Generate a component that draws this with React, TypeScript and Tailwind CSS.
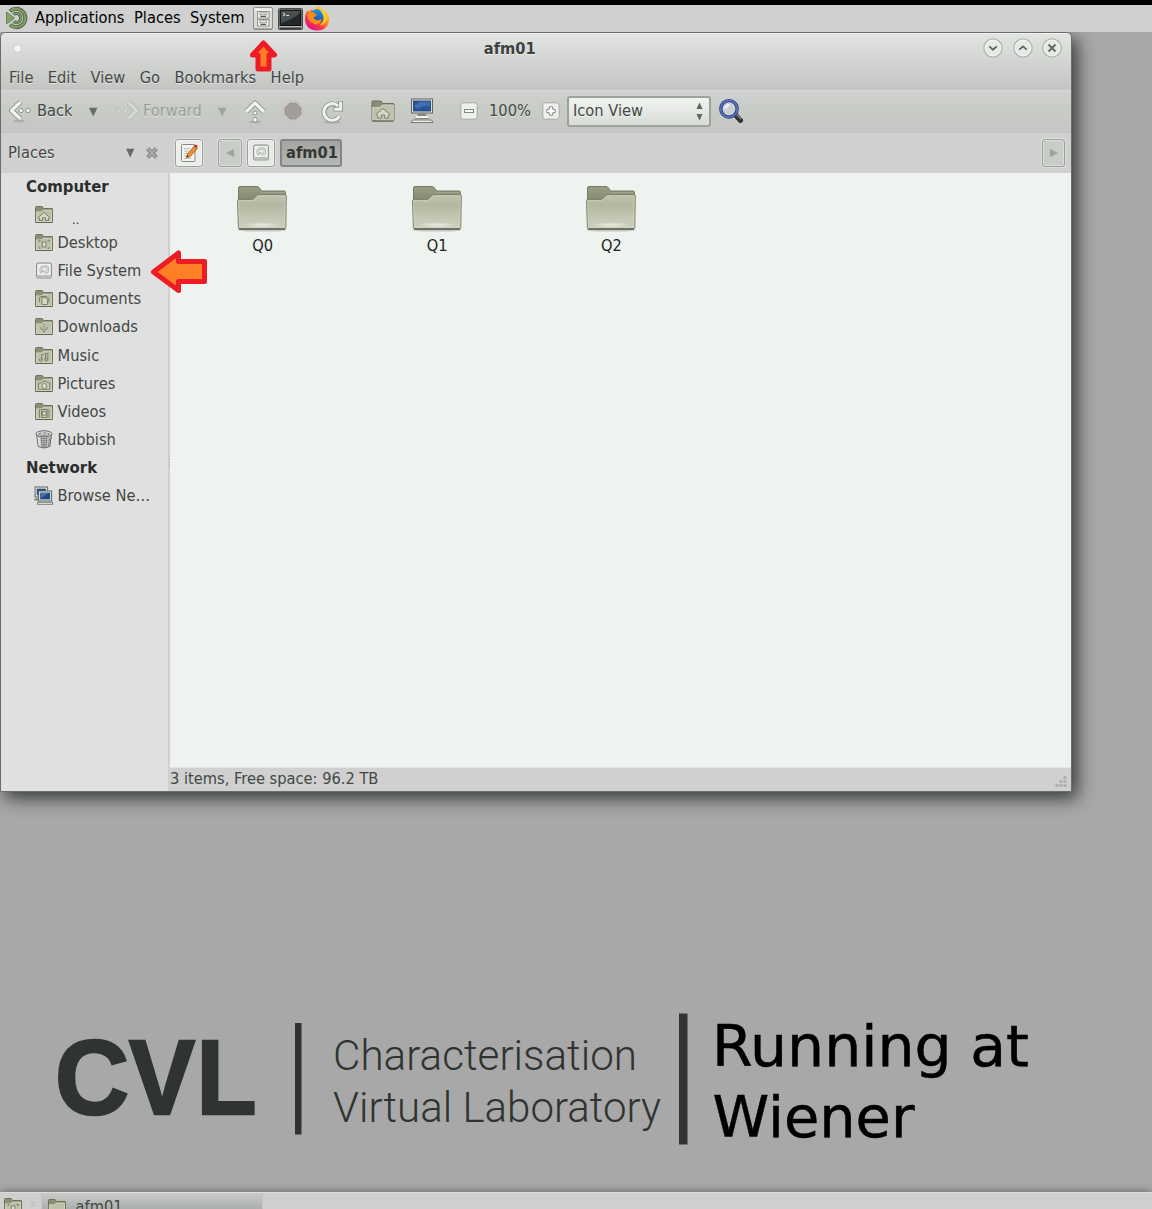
import React, { useId } from "react";

const CARVE = "[text-shadow:0_1px_0_rgba(255,255,255,0.55)]";

function FolderShape({ children }: { children?: React.ReactNode }) {
  const id = useId();
  return (
    <svg width="18" height="17" viewBox="0 0 18 17" className="block shrink-0">
      <defs>
        <linearGradient id={id} x1="0" y1="0" x2="0" y2="1">
          <stop offset="0" stopColor="#b9bda6" />
          <stop offset="1" stopColor="#c3c8b2" />
        </linearGradient>
      </defs>
      <path d="M.5 15.5V1.5Q.5.5 1.5.5h5.6l1.6 2h8.3q.5 0 .5.5v12.5q0 1-1 1h-15q-1 0-1-1z" fill="#8b8f78" stroke="#6f735c" />
      <path d="M1 16V5.6h5.5L8 3.8h9V16z" fill={`url(#${id})`} />
      <path d="M1.5 15.5V6h5.3L8.3 4.3h8.2v11.2z" fill="none" stroke="#d3d7c4" strokeWidth=".7" />
      <path d="M.5 16.5h17" stroke="#62664f" />
      {children}
    </svg>
  );
}

const EM = { fill: "none", stroke: "#7d836a", strokeWidth: 1 };

function HomeIcon() {
  return (
    <FolderShape>
      <path d="M3 11.7 9 6.400l6 5.300-1.500.5v2.300h-3v-2.700h-3v2.700h-3v-2.300z" {...EM} fill="#d3d7c5" />
    </FolderShape>
  );
}
function DesktopIcon() {
  return (
    <FolderShape>
      <path d="M4 8V6.6h1.7M12.6 6.6h1.8V8M4 12.8v1.5h1.7M12.6 14.3h1.8v-1.5" {...EM} />
      <rect x="7.3" y="8" width="3.6" height="5" {...EM} fill="#dde0d3" />
    </FolderShape>
  );
}
function DocumentsIcon() {
  return (
    <FolderShape>
      <path d="M4.500 12V7.500Q5 6.500 6 6.500h5q2.500.8 3 3.500v3" {...EM} />
      <path d="M7 7.500v7h5.500V10L10 7.500z" {...EM} fill="#d5d9c8" />
    </FolderShape>
  );
}
function DownloadsIcon() {
  return (
    <FolderShape>
      <path d="M5.500 9.500 9 13.500l3.500-4" {...EM} strokeWidth={1.5} strokeDasharray="1.5 .8" />
      <path d="M9 5.500v6" {...EM} strokeDasharray="1.500 1" />
    </FolderShape>
  );
}
function MusicIcon() {
  return (
    <FolderShape>
      <path d="M6.800 13V7.500h1.700M12.800 12.500V6.500h-2.300v6" {...EM} />
      <circle cx="5.700" cy="13" r="1.400" {...EM} /><circle cx="11.200" cy="12.700" r="1.400" {...EM} />
    </FolderShape>
  );
}
function PicturesIcon() {
  return (
    <FolderShape>
      <path d="M3.500 8h3l1.200-1.700h3.500L12.500 8h2.300v6.300H3.500z" {...EM} fill="#c9cdb9" />
      <circle cx="9.300" cy="11" r="2.500" {...EM} fill="#dde0d3" />
    </FolderShape>
  );
}
function VideosIcon() {
  return (
    <FolderShape>
      <path d="M4.500 6.300v8.700M14 6.300v8.700" {...EM} />
      <rect x="6.600" y="6.500" width="5.500" height="8" {...EM} />
      <rect x="7.500" y="8.800" width="3.600" height="3.300" {...EM} fill="#e0e3d8" />
    </FolderShape>
  );
}
function DriveIcon() {
  return (
    <svg width="18" height="17" viewBox="0 0 18 17" className="block shrink-0">
      <rect x="1.500" y="1" width="15" height="15" rx="1.500" fill="#d4d7d3" stroke="#8f928e" />
      <rect x="2.500" y="2" width="13" height="11" rx="1" fill="#edefec" />
      <rect x="2.500" y="13" width="13" height="2.400" fill="#babdb9" />
      <path d="M5.500 10.500Q3.500 5 8 4h4q1.500 0 1.500 2v3.500q0 1.500-1.500 1.500H9.500" fill="#dde0dc" stroke="#b4b7b3" />
      <ellipse cx="9.500" cy="7.300" rx="2.600" ry="1.800" fill="#f3f5f2" stroke="#b4b7b3" strokeWidth=".8" />
      <path d="m5.500 11 3-2.300" stroke="#9b9e9a" />
    </svg>
  );
}
function TrashIcon() {
  return (
    <svg width="18" height="19" viewBox="0 0 18 19" className="block shrink-0">
      <path d="M1.500 4 3.300 16.500Q9 19.500 14.800 16.500L16.500 4z" fill="#bfc2bf" stroke="#646764" />
      <path d="M6.500 8l.5 8.500M9 8v9M11.500 8l-.5 8.500" stroke="#6a6d6a" strokeWidth="1.500" strokeDasharray="1.200 .7" />
      <path d="M3 7.500 4.200 16M4.500 8l.8 8.500" stroke="#e6e8e6" /><path d="m14.500 8-1 8" stroke="#8b8e8b" />
      <ellipse cx="9" cy="3.800" rx="8" ry="3" fill="#e4e6e4" stroke="#646764" />
      <ellipse cx="9" cy="4" rx="6" ry="1.700" fill="#8b8e8b" />
      <path d="m5 4.500 2.500-2 2 2 2.500-2 1 2z" fill="#eceeec" />
    </svg>
  );
}
function NetworkIcon() {
  return (
    <svg width="20" height="19" viewBox="0 0 20 19" className="-ml-px block shrink-0">
      <rect x="1.100" y="1" width="12.500" height="10" fill="#e4e5df" stroke="#62645c" />
      <rect x="2.800" y="2.700" width="9" height="6.500" fill="#204a87" />
      <path d="M.5 13.500H6" stroke="#777a70" strokeWidth="2" />
      <rect x="4.600" y="5" width="13" height="10" fill="#e4e5df" stroke="#62645c" />
      <rect x="6.200" y="6.600" width="9.900" height="6.800" fill="#204a87" />
      <path d="M7 7h7l-5 4H7z" fill="#4372b4" />
      <path d="M9.500 15.500h4V17h-4z" fill="#aeb0a6" />
      <rect x="3.600" y="16.300" width="15" height="2" fill="#e4e5df" stroke="#6e7067" strokeWidth=".8" />
    </svg>
  );
}

function BigFolder() {
  const id = useId();
  return (
    <svg width="52" height="47" viewBox="0 0 52 47" className="block">
      <defs>
        <linearGradient id={id + "b"} x1="0" y1="0" x2="0" y2="1">
          <stop offset="0" stopColor="#9b9f86" /><stop offset="1" stopColor="#7c8069" />
        </linearGradient>
        <linearGradient id={id + "f"} x1="0" y1="0" x2="0" y2="1">
          <stop offset="0" stopColor="#c0c3b0" /><stop offset=".3" stopColor="#b4b7a0" />
          <stop offset=".7" stopColor="#c5c8b4" /><stop offset="1" stopColor="#cdd0be" />
        </linearGradient>
        <radialGradient id={id + "g"}>
          <stop offset="0" stopColor="#fff" stopOpacity=".6" /><stop offset="1" stopColor="#fff" stopOpacity="0" />
        </radialGradient>
      </defs>
      <ellipse cx="26" cy="45" rx="25" ry="1.600" fill="#000" opacity=".18" />
      <path d="M2.500 20V3q0-1.500 1.500-1.500h17q1.500 0 2.500 1.500l2.200 3H48q1.500 0 1.500 1.500V20z" fill={`url(#${id}b)`} stroke="#74785f" />
      <path d="M25 7.500h23" stroke="#a2a58d" />
      <path d="M1.500 15.500q0-1 1-1h12.800q2 0 3.200-1.500l1.800-2q1.200-1.300 3-1.300h26q1 0 1 1L49.800 42.500q0 1.500-1.500 1.500H4Q2.500 44 2.400 42.500z" fill={`url(#${id}f)`} stroke="#7d8169" />
      <path d="M2.600 15.600h13q2.300 0 3.600-1.500l1.800-2q1-1.200 2.600-1.200h25.500L48.600 42.500H3.600z" fill="none" stroke="#cfd2c0" strokeWidth=".7" />
      <ellipse cx="26" cy="40" rx="19" ry="3" fill={`url(#${id}g)`} />
      <path d="M3 44h46" stroke="#5d6150" strokeWidth="1.300" />
    </svg>
  );
}

function MateLogo() {
  return (
    <svg width="24" height="24" viewBox="0 0 24 24" className="block">
      <g fill="none" stroke="#4b6040">
        <path d="M5 5.200A9.200 9.200 0 1 1 5 18.800" strokeWidth="4" />
        <path d="M8.500 8.500a4.500 4.500 0 1 1 0 7" strokeWidth="3.300" />
      </g>
      <g fill="none" stroke="#7d9d63">
        <path d="M5.500 4.800A9.200 9.200 0 1 1 5.500 19.200" strokeWidth="2.400" />
        <path d="M8.700 8.300a4.500 4.500 0 1 1 0 7.400" strokeWidth="1.800" />
      </g>
      <path d="M0 4.500 10 12 0 19.500z" fill="#d0d0d0" />
      <path d="M1.500 6 9.500 12l-8 6z" fill="#86a36e" stroke="#5b7449" strokeWidth=".8" />
    </svg>
  );
}
function CabinetIcon() {
  return (
    <svg width="20" height="23" viewBox="0 0 20 23" className="block">
      <rect x=".5" y=".5" width="19" height="22" rx="1.500" fill="#d9dbd6" stroke="#8d9088" />
      <path d="M1.500 1.500h17v2h-17z" fill="#f5f6f3" />
      {[4.5, 12.5].map((y) => (
        <g key={y}>
          <rect x="4.500" y={y} width="11.500" height="6.500" fill="#eef0ec" stroke="#91948c" />
          <rect x="7" y={y + 1.3} width="6.500" height="2" fill="#fff" stroke="#888b83" strokeWidth=".8" />
          <path d={`M7.500 ${y + 4.9}h5.500`} stroke="#55584f" strokeWidth="1.200" />
        </g>
      ))}
      <path d="M1 21.500h18" stroke="#a4a79f" />
    </svg>
  );
}
function TerminalIcon() {
  return (
    <svg width="25" height="22" viewBox="0 0 25 22" className="mt-px block">
      <rect x=".5" y=".5" width="24" height="21" rx="1" fill="#b9bbb8" stroke="#4a4c4a" />
      <rect x="2" y="2" width="21" height="15.500" fill="#23282a" stroke="#0c0c0c" />
      <path d="M3 15Q14 12 22 5V3H3z" fill="#485052" />
      <path d="m5 5 2.200 1.500L5 8M8.500 7.500H11" fill="none" stroke="#f2f2f2" />
      <path d="M1.500 20.300h22" stroke="#3b3d3b" strokeWidth="1.800" />
    </svg>
  );
}
function FirefoxIcon() {
  return (
    <svg width="26" height="26" viewBox="0 0 26 26" className="block">
      <defs>
        <linearGradient id="fxbody" x1=".85" y1=".05" x2=".2" y2=".9">
          <stop offset="0" stopColor="#ffe226" /><stop offset=".4" stopColor="#ff980e" />
          <stop offset=".7" stopColor="#ff3647" /><stop offset="1" stopColor="#e31587" />
        </linearGradient>
        <linearGradient id="fxglobe" x1=".7" y1="0" x2=".4" y2="1">
          <stop offset="0" stopColor="#169fe6" /><stop offset="1" stopColor="#2a3b9c" />
        </linearGradient>
      </defs>
      <path d="M1 14C1 10 2 7.500 4 5q.3 1.200 1 2Q6.500 4.500 8.500 3.300 8 5 9 6L15 1q1 2 4 4 1.500 1 2.200 3Q21 6 20.500 5 25 9 25 14.500 24.500 25 13 25.500 1.500 25 1 14z" fill="url(#fxbody)" />
      <circle cx="13" cy="11.500" r="7.300" fill="url(#fxglobe)" />
      <path d="M3 10q2-3.500 6.500-2.800L13 10q-.5 1.500-3.500 2 .3 3 4 3.200 2.500-.2 4.500-1.200Q16.500 19.500 11.500 19.500 4 17.500 3 10z" fill="#ff8a16" />
      <path d="M13.500 3Q13.500 1.500 15 .8q1 2.200 4 4.700 5 4.500 3.500 9.500-1.500 5-7 5.500 5-3.500 4-8.500-1-5.500-6-9z" fill="#ffc928" />
    </svg>
  );
}

function BackIcon() {
  return (
    <svg width="24" height="24" viewBox="0 0 24 24" className="block shrink-0">
      <ellipse cx="11" cy="22" rx="6" ry="1.500" fill="#000" opacity=".12" />
      <path d="M12.500 3 3.500 11.500l9 8.500" fill="none" stroke="#878c85" strokeWidth="5" strokeLinejoin="round" />
      <path d="M12.500 3 3.500 11.500l9 8.500" fill="none" stroke="#f1f3ef" strokeWidth="3.300" strokeLinejoin="round" />
      <g fill="#f8f9f7" stroke="#878c85" strokeWidth=".9"><circle cx="13" cy="11.500" r="2.200" /><circle cx="20" cy="11.500" r="2.200" /></g>
    </svg>
  );
}
function ForwardIcon() {
  return (
    <svg width="24" height="24" viewBox="0 0 24 24" className="block shrink-0">
      <path d="M12.500 3.500 20.500 11.500l-8 8" fill="none" stroke="#b2b5b1" strokeWidth="4.800" />
      <path d="M12.500 3.500 20.500 11.500l-8 8" fill="none" stroke="#d6d8d5" strokeWidth="3.200" />
      <g fill="#d9dbd8" stroke="#b4b7b3" strokeWidth=".8"><circle cx="3" cy="11.500" r="1.800" /><circle cx="9.500" cy="11.500" r="1.900" /></g>
    </svg>
  );
}
function UpIcon() {
  return (
    <svg width="24" height="25" viewBox="0 0 24 25" className="block shrink-0">
      <ellipse cx="12" cy="23" rx="6" ry="1.500" fill="#000" opacity=".12" />
      <path d="M3 13 12 4l9 9" fill="none" stroke="#878c85" strokeWidth="5" strokeLinejoin="round" />
      <path d="M3 13 12 4l9 9" fill="none" stroke="#f1f3ef" strokeWidth="3.300" strokeLinejoin="round" />
      <g fill="#f8f9f7" stroke="#878c85" strokeWidth=".9"><circle cx="12" cy="14" r="2" /><circle cx="12" cy="20.800" r="2.300" /></g>
    </svg>
  );
}
function StopIcon() {
  return (
    <svg width="22" height="22" viewBox="0 0 22 22" className="block shrink-0">
      <path d="M6.800 1h8.400L21 6.800v8.400L15.200 21H6.800L1 15.200V6.800z" fill="#d0d2cf" stroke="#bfc1be" />
      <path d="M7.700 3h6.600L19 7.700v6.600L14.300 19H7.700L3 14.300V7.700z" fill="#a39d9c" stroke="#989392" />
    </svg>
  );
}
function ReloadIcon() {
  return (
    <svg width="24" height="25" viewBox="0 0 24 25" className="block shrink-0">
      <ellipse cx="12" cy="23.300" rx="9" ry="1.300" fill="#000" opacity=".12" />
      <path d="M19.500 17.300a8.300 8.300 0 1 1-1.500-10.300" fill="none" stroke="#8c918a" strokeWidth="4.800" />
      <path d="M20.600 2v8.300h-7" fill="none" stroke="#8c918a" strokeWidth="4.600" />
      <path d="M19.300 17.200a8.300 8.300 0 1 1-1.300-10.200" fill="none" stroke="#f0f2ee" strokeWidth="3" />
      <path d="M20.600 2.700v7.600h-6.300" fill="none" stroke="#f0f2ee" strokeWidth="2.900" />
    </svg>
  );
}
function ToolHomeIcon() {
  return (
    <svg width="24" height="22" viewBox="0 0 24 22" className="block shrink-0">
      <path d="M1 20V2q0-1 1-1h8l2 2.500h10q1 0 1 1V20q0 1-1 1H2q-1 0-1-1z" fill="#8a8e77" stroke="#6b6f5a" />
      <path d="M1.700 20V7.500H9L11.500 5h10.800v15.300z" fill="#bec2ad" stroke="#d8dbcb" strokeWidth=".8" />
      <path d="m5 14.500 7-6 7 6-1.800 1v2.700h-3.400v-3.200h-3.600v3.200H6.800v-2.700z" fill="#d6d9ca" stroke="#7b7f69" />
      <path d="M1.500 21h21" stroke="#5f634f" />
    </svg>
  );
}
function ComputerIcon() {
  return (
    <svg width="24" height="26" viewBox="0 0 24 26" className="block shrink-0">
      <rect x="1.500" y="1" width="21" height="14" fill="#ddded8" stroke="#62655c" />
      <rect x="3.500" y="3" width="17" height="10" fill="#2a5596" stroke="#1b3c73" strokeWidth=".8" />
      <path d="M4 8 11 3.500h9V8Q13 7 8 11z" fill="#4d7fbe" opacity=".65" />
      <path d="M8 15.500h8l.7 3H7.300z" fill="#85877f" /><path d="M6 19h12" stroke="#f2f3ef" strokeWidth="2" />
      <path d="M5 20.500h14" stroke="#8b8d85" />
      <path d="M1 24.500 2.500 22h19l1.500 2.500z" fill="#eeefea" stroke="#75786d" />
    </svg>
  );
}
function ZoomButton({ plus }: { plus?: boolean }) {
  return (
    <svg width="18" height="18" viewBox="0 0 18 18" className="block shrink-0">
      <rect x=".8" y=".8" width="16.400" height="16.400" rx="2.500" fill="#eef0ed" stroke="#a5a9a4" />
      {plus
        ? <path d="M7.300 4.800h3.400v2.500h2.500v3.400h-2.500v2.500H7.300v-2.500H4.800V7.300h2.500z" fill="#fff" stroke="#848983" />
        : <rect x="4.500" y="7.500" width="9" height="3" fill="#fff" stroke="#848983" />}
    </svg>
  );
}
function SearchIcon() {
  return (
    <svg width="26" height="26" viewBox="0 0 26 26" className="block shrink-0">
      <path d="m17.500 17 5 5.500" stroke="#33332f" strokeWidth="5" strokeLinecap="round" />
      <path d="m18 16 5 5" stroke="#8b8b85" strokeWidth="1.200" />
      <circle cx="11" cy="10.800" r="8.200" fill="#ccd0d4" stroke="#304687" strokeWidth="3.400" />
      <circle cx="11" cy="10.800" r="8.300" fill="none" stroke="#5e77c2" strokeWidth="1.500" />
      <path d="M6 11a5 5 0 0 1 6-5q-1 4-6 5z" fill="#f4f6f8" opacity=".85" />
    </svg>
  );
}
function PencilPage() {
  return (
    <svg width="19" height="20" viewBox="0 0 19 20" className="block">
      <rect x="1.500" y="1.500" width="13.500" height="17" rx="1" fill="#f3f4f1" stroke="#878a84" />
      <path d="M4 5.500h6M4 8h5M4 10.500h4M4 13h3M4 15.500h7" stroke="#bcbeb9" />
      <path d="m6.500 14.500 1-3.500 7-8 3 2.300-7.300 8.200z" fill="#f0912e" stroke="#8f5413" strokeWidth=".8" />
      <path d="m13.500 3.500 1.500-1.700q1.500-.5 2.700 1L16.800 5z" fill="#d42a2a" />
      <path d="m6.300 14.700 1-2.500 1.400 1.300z" fill="#333" />
    </svg>
  );
}
function Tri({ dir = "down", tone = "#666c67" }: { dir?: string; tone?: string }) {
  const d = dir === "down" ? "M1 .8h8.400L5.200 9.500z" : dir === "left" ? "M9 1v8L1 5z" : "M1 1v8l8-4z";
  return <svg width="10" height="10" viewBox="0 0 10 10" className="block shrink-0"><path d={d} fill={tone} /></svg>;
}
function WinButton({ d }: { d: string }) {
  return (
    <svg width="20" height="20" viewBox="0 0 20 20" className="block">
      <circle cx="10" cy="10" r="9.100" fill="#e6e9e5" stroke="#b1b5b0" strokeWidth="1.300" />
      <circle cx="10" cy="10" r="7.800" fill="none" stroke="#f3f5f2" />
      <path d={d} fill="none" stroke="#616662" strokeWidth="1.800" />
    </svg>
  );
}

function TopPanel() {
  return (
    <header className="relative z-10 flex h-8 items-center border-t-[5px] border-black bg-[#d0d0d0] pb-px pl-[5px] text-black">
      <MateLogo />
      <span className="ml-1.5 w-[99px] whitespace-nowrap">Applications</span>
      <span className="w-14">Places</span>
      <span className="w-[63px]">System</span>
      <CabinetIcon />
      <div className="ml-[5px]"><TerminalIcon /></div>
      <div className="ml-px"><FirefoxIcon /></div>
    </header>
  );
}

function TitleAndMenu() {
  return (
    <div className="h-[57px] rounded-t-[5px] border-t border-[#f0f3ef] bg-linear-to-b from-[#e1e4e1] via-[#d2d4d1] via-50% to-[#c4c5c3]">
      <div className="flex h-7 items-center">
        <div className="ml-3 size-[9px] rounded-full border border-[#c8ccc7] bg-[#f2f4f1]" />
        <div className={`flex-1 pt-px pl-[14px] text-center font-bold text-[#3d423e] ${CARVE}`}>afm01</div>
        <div className="mr-[9px] flex gap-[9.300px]">
          <WinButton d="m6.300 8.400 3.700 3.300 3.700-3.300" />
          <WinButton d="m6.300 11.700 3.700-3.300 3.700 3.300" />
          <WinButton d="m6.500 6.500 7 7M13.500 6.500l-7 7" />
        </div>
      </div>
      <nav className={`flex h-[29px] items-center gap-[14.400px] pt-[2px] pl-2 ${CARVE}`}>
        <span>File</span><span>Edit</span><span>View</span><span>Go</span><span>Bookmarks</span><span>Help</span>
      </nav>
    </div>
  );
}

function Toolbar() {
  return (
    <div className={`flex h-[42px] items-center border-t border-[#d8dad8] bg-linear-to-b from-[#d0d1d0] via-[#c8ccc6] via-40% to-[#c6c6c6] pb-px pl-[7px] ${CARVE}`}>
      <div className="w-[29px]"><BackIcon /></div>
      <span className="w-[51px] pb-px">Back</span>
      <div className="w-7 pt-px"><Tri /></div>
      <div className="w-[27px]"><ForwardIcon /></div>
      <span className="w-[74px] pb-px text-[#999d99]">Forward</span>
      <div className="w-[26px] pt-px"><Tri tone="#9fa39f" /></div>
      <div className="w-[39px]"><UpIcon /></div>
      <div className="w-[38px]"><StopIcon /></div>
      <div className="w-[51px]"><ReloadIcon /></div>
      <div className="w-[39px]"><ToolHomeIcon /></div>
      <div className="w-[50px]"><ComputerIcon /></div>
      <div className="w-[29px]"><ZoomButton /></div>
      <span className="w-[53px] pb-px">100%</span>
      <div className="w-[25px]"><ZoomButton plus /></div>
      <div className="flex h-[31px] w-[144px] items-center justify-between rounded-[3px] border-2 border-[#9da29d] bg-linear-to-b from-[#f2f4f1] to-[#d8dcd7] pr-1.5 pl-1">
        <span className="pb-px">Icon View</span>
        <svg width="7" height="19" viewBox="0 0 7 19"><path d="M3.500.5 6.500 7h-6zM.5 12h6l-3 6.500z" fill="#606661" /></svg>
      </div>
      <div className="ml-[7px]"><SearchIcon /></div>
    </div>
  );
}

const BUTTON = "flex h-7 items-center justify-center rounded-[3px] border border-[#9ba09b] shadow-[inset_0_0_0_1px_rgba(255,255,255,0.35),0_0_0_1px_rgba(225,228,225,0.7)]";

function LocationBar() {
  return (
    <div className="flex h-[41px] items-center border-t border-[#c4c8c4] bg-[#d0d0d0] pb-px">
      <span className={`ml-[7px] w-[117px] ${CARVE}`}>Places</span>
      <Tri />
      <svg width="14" height="14" viewBox="0 0 14 14" className="ml-[10px]">
        <path d="m2.500 2.500 9 9M11.500 2.500l-9 9" stroke="#858a85" strokeWidth="4.200" />
        <path d="m2.700 2.700 8.600 8.600M11.300 2.700l-8.600 8.600" stroke="#a9ada9" strokeWidth="1.800" />
      </svg>
      <div className={`${BUTTON} ml-4 w-7 bg-[#ebeeea]`}><PencilPage /></div>
      <div className={`${BUTTON} ml-[15px] w-6 bg-[#c8cdc8]`}><Tri dir="left" tone="#9da29d" /></div>
      <div className={`${BUTTON} ml-[5px] w-7 bg-[#e7eae6]`}><DriveIcon /></div>
      <div className="ml-[5px] flex h-7 w-[62px] items-center justify-center rounded-[3px] border-2 border-[#838783] bg-linear-to-b from-[#a3a5a3] to-[#b6b8b5] pt-px pl-0.5 font-bold text-[#343834]">afm01</div>
      <div className={`${BUTTON} mr-[6px] ml-auto w-[23px] bg-[#c8cdc8]`}><Tri dir="right" tone="#9da29d" /></div>
    </div>
  );
}

const PLACES = [
  { label: "Desktop", Icon: DesktopIcon },
  { label: "File System", Icon: DriveIcon },
  { label: "Documents", Icon: DocumentsIcon },
  { label: "Downloads", Icon: DownloadsIcon },
  { label: "Music", Icon: MusicIcon },
  { label: "Pictures", Icon: PicturesIcon },
  { label: "Videos", Icon: VideosIcon },
  { label: "Rubbish", Icon: TrashIcon },
];

function Place({ label, Icon }: { label: string; Icon: React.ComponentType }) {
  return (
    <li className="flex h-[28.100px] items-center pl-[34px]">
      <div className="w-[22.500px] shrink-0"><Icon /></div>
      <span className="pt-px whitespace-nowrap">{label}</span>
    </li>
  );
}

function Sidebar() {
  return (
    <aside className="flex w-[169px] shrink-0 border-r-2 border-[#cfd0cf] bg-[#e0e0e0]">
      <ul className="-mt-[0.600px] w-full">
        <li className="flex h-[28.100px] items-center pl-[25px] font-bold text-[#2b2e2c]">
          <span className="pt-px text-[16.600px]">Computer</span>
        </li>
        <li className="flex h-[28.100px] items-center pl-[34px]">
          <div className="w-[37px] shrink-0"><HomeIcon /></div>
          <span className="pt-2.5 text-[13px] text-[#333]">..</span>
        </li>
        {PLACES.map((p) => <Place key={p.label} {...p} />)}
        <li className="flex h-[28.100px] items-center pl-[25px] font-bold text-[#2b2e2c]">
          <span className="pt-px text-[16.600px]">Network</span>
        </li>
        <Place label="Browse Ne…" Icon={NetworkIcon} />
      </ul>
    </aside>
  );
}

function FileManager() {
  return (
    <section className="absolute top-8 left-0 flex h-[760px] w-[1072px] flex-col rounded-t-md border border-[#6a6d6a] bg-[#d0d0d0] text-[#434844] shadow-[5px_6px_18px_rgba(20,28,22,0.8)]">
      <TitleAndMenu />
      <Toolbar />
      <LocationBar />
      <div className="flex min-h-0 flex-1">
        <Sidebar />
        <div className="flex flex-1 flex-col">
          <main className="flex flex-1 items-start bg-[#eef3ef] pt-3 pl-[5px] text-[#1f2220]">
            {["Q0", "Q1", "Q2"].map((name) => (
              <div key={name} className="flex w-[174.400px] flex-col items-center">
                <BigFolder />
                <span className="mt-[4px] ml-px leading-5">{name}</span>
              </div>
            ))}
          </main>
          <footer className="flex h-[24px] items-center justify-between border-t border-[#e2e4e2] pb-px">
            <span>3 items, Free space: 96.2 TB</span>
            <svg width="12" height="12" viewBox="0 0 12 12" className="mt-1.5 mr-1">
              <path d="M8.500 0h3v3h-3zM8.500 4h3v3h-3zM8.500 8h3v3h-3zM4.500 4h3v3h-3zM4.500 8h3v3h-3zM.5 8h3v3h-3z" fill="#adb2ac" />
            </svg>
          </footer>
        </div>
      </div>
      <svg width="3" height="10" viewBox="0 0 3 10" className="absolute top-[425px] left-[167px]">
        <path d="M0 1h2M0 4.500h2M0 8h2" stroke="#b5b8b5" />
      </svg>
    </section>
  );
}

function Wallpaper() {
  return (
    <svg width="1000" height="150" viewBox="40 1005 1000 150" className="absolute top-[1005px] left-10 [font-stretch:normal]">
      <g fill="#2f3430">
        <g fontSize="106" fontWeight="700" fontFamily="Liberation Sans, sans-serif" stroke="#2f3430" strokeWidth="2.500">
          <text x="55" y="1114" textLength="74" lengthAdjust="spacingAndGlyphs">C</text>
          <text x="129" y="1114" textLength="66" lengthAdjust="spacingAndGlyphs">V</text>
          <text x="196.500" y="1114" textLength="60" lengthAdjust="spacingAndGlyphs">L</text>
        </g>
        <rect x="295" y="1023" width="6.500" height="111.500" />
        <rect x="679" y="1013.500" width="8.500" height="131" />
        <g fontSize="42" fontWeight="300" fontFamily="Roboto, sans-serif">
          <text x="333" y="1070" textLength="304" lengthAdjust="spacingAndGlyphs">Characterisation</text>
          <text x="333" y="1122" textLength="328" lengthAdjust="spacingAndGlyphs">Virtual Laboratory</text>
        </g>
      </g>
      <g fill="#000" fontSize="57" fontFamily="DejaVu Sans, sans-serif" stroke="#000" strokeWidth=".5">
        <text x="712" y="1065.500" textLength="317" lengthAdjust="spacingAndGlyphs">Running at</text>
        <text x="712.500" y="1136.500" textLength="202" lengthAdjust="spacingAndGlyphs">Wiener</text>
      </g>
    </svg>
  );
}

function Taskbar() {
  return (
    <footer className="absolute inset-x-0 bottom-0 flex h-[17px] items-start overflow-hidden border-t border-[#dcdcdc] bg-[#cfcfcf] text-[#434844] shadow-[0_0_9px_rgba(40,50,42,0.6)]">
      <div className="mt-[5px] ml-1 w-[27px]"><DesktopIcon /></div>
      <svg width="5" height="14" viewBox="0 0 5 14"><path d="M0 9h4M0 12h4" stroke="#b5b7b5" /></svg>
      <div className="ml-[5px] flex h-4 w-[222px] border-x border-[#c2c5c2] bg-linear-to-b from-[#c9cbc9] to-[#abb0ac] pl-[6px]">
        <div className="mt-1.5 w-[27.500px]"><FolderShape /></div>
        <span className="mt-[4px] leading-5">afm01</span>
      </div>
    </footer>
  );
}

export default function App() {
  return (
    <div className="relative h-[1209px] w-[1152px] overflow-hidden bg-[#a8a8a8] font-['DejaVu_Sans_Condensed','DejaVu_Sans',sans-serif] text-[16.300px] leading-5 [font-stretch:condensed]">
      <TopPanel />
      <Wallpaper />
      <FileManager />
      <Taskbar />
      <svg width="29" height="34" viewBox="0 0 29 34" className="absolute top-[39px] left-[249px] z-20">
        <path d="M14.500 4 25.500 16h-5.500v14H9V16H3.500z" fill="#ff7f27" stroke="#ed1c24" strokeWidth="5" strokeLinejoin="round" />
      </svg>
      <svg width="60" height="46" viewBox="0 0 60 46" className="absolute top-[249px] left-[149px] z-20">
        <path d="M4.500 23 29.500 4v8.500H55.500v20H29.500v9z" fill="#ff7f27" stroke="#ed1c24" strokeWidth="5" strokeLinejoin="round" />
      </svg>
    </div>
  );
}
